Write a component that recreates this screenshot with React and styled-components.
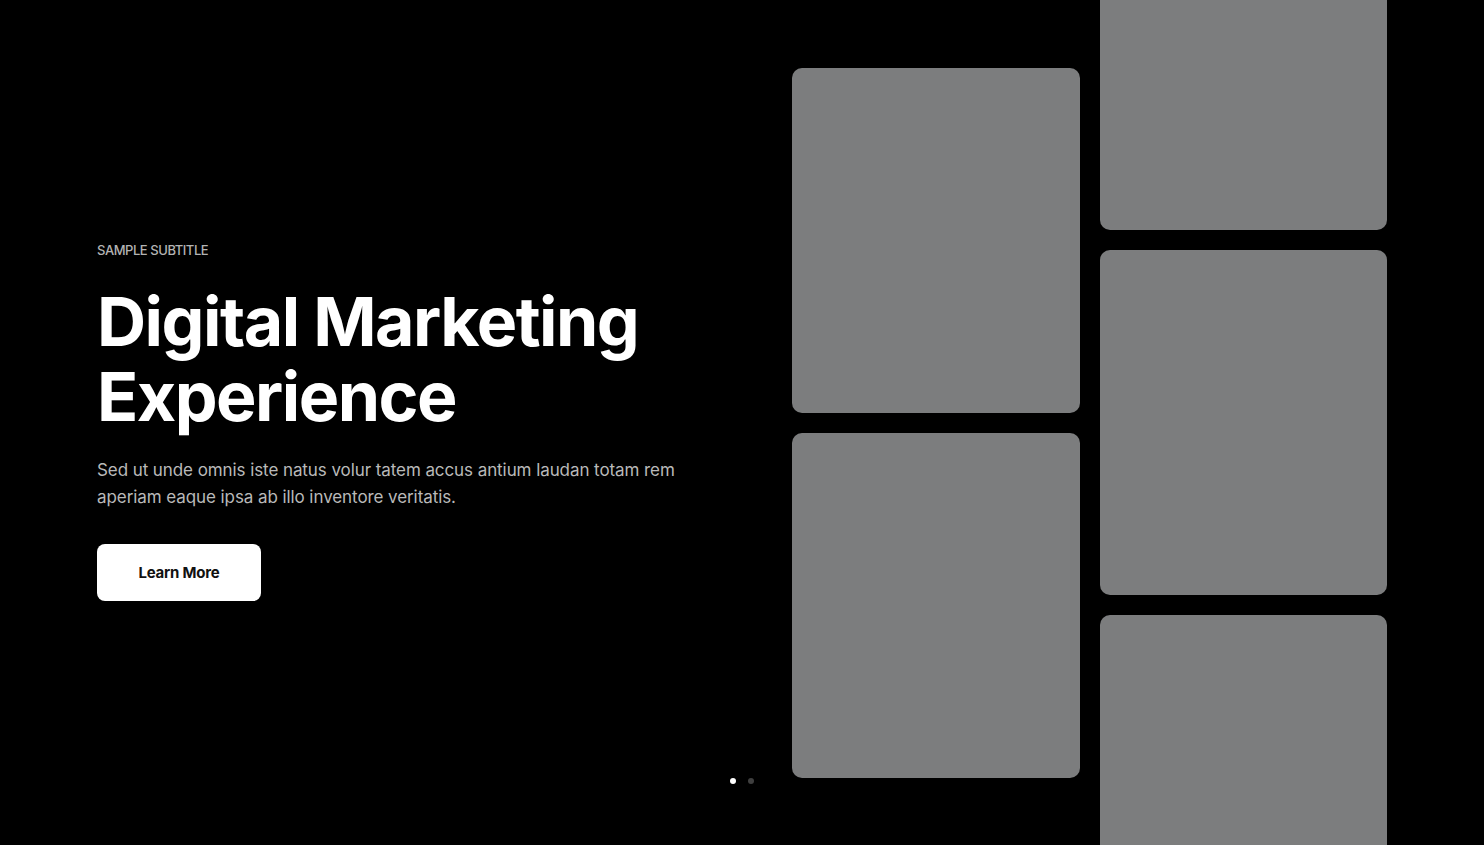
import React from "react";
import styled, { createGlobalStyle } from "styled-components";

const Global = createGlobalStyle`
  html, body { margin: 0; padding: 0; background: #000; }
  * { box-sizing: border-box; }
`;

const Hero = styled.section`
  position: relative;
  height: 845px;
  overflow: hidden;
  background: #000;
  display: flex;
  align-items: center;
  justify-content: space-between;
  padding: 0 97px;
  font-family: Inter, "Noto Sans", sans-serif;
`;

const Content = styled.div`
  display: flex;
  flex-direction: column;
  align-items: flex-start;
  width: 640px;
`;

const Subtitle = styled.div`
  font-size: 13px;
  line-height: 12px;
  font-weight: 500;
  color: #b3b3b3;
  text-transform: uppercase;
  letter-spacing: -0.45px;
`;

const Title = styled.h1`
  margin: 28px 0 0;
  font-size: 68px;
  line-height: 75px;
  font-weight: 700;
  color: #fff;
  letter-spacing: -1.5px;
`;

const Text = styled.p`
  margin: 23px 0 0;
  max-width: 600px;
  font-size: 17px;
  line-height: 27px;
  color: #b9b9b9;
  letter-spacing: -0.08px;
`;

const Button = styled.button`
  margin-top: 33px;
  width: 164px;
  height: 57px;
  border: 0;
  border-radius: 8px;
  background: #fff;
  color: #111;
  font-family: inherit;
  font-size: 15px;
  font-weight: 700;
  letter-spacing: -0.2px;
  cursor: pointer;
`;

const Gallery = styled.div`
  display: flex;
  gap: 20px;
  align-items: center;
`;

const Column = styled.div`
  display: flex;
  flex-direction: column;
  gap: 20px;
  width: ${(p) => p.$w}px;
`;

const Card = styled.div`
  height: 345px;
  border-radius: 10px;
  background: #7c7d7e;
`;

const Dots = styled.div`
  position: absolute;
  left: 730px;
  bottom: 61px;
  display: flex;
  gap: 12px;
`;

const Dot = styled.span`
  width: 6px;
  height: 6px;
  border-radius: 50%;
  background: ${(p) => (p.$active ? "#fff" : "#3f3f3f")};
`;

export default function App() {
  return (
    <>
      <Global />
      <Hero>
        <Content>
          <Subtitle>Sample Subtitle</Subtitle>
          <Title>
            Digital Marketing
            <br />
            Experience
          </Title>
          <Text>
            Sed ut unde omnis iste natus volur tatem accus antium laudan totam rem
            aperiam eaque ipsa ab illo inventore veritatis.
          </Text>
          <Button>Learn More</Button>
        </Content>
        <Gallery>
          <Column $w={288}>
            <Card />
            <Card />
          </Column>
          <Column $w={287}>
            <Card />
            <Card />
            <Card />
          </Column>
        </Gallery>
        <Dots>
          <Dot $active />
          <Dot />
        </Dots>
      </Hero>
    </>
  );
}
